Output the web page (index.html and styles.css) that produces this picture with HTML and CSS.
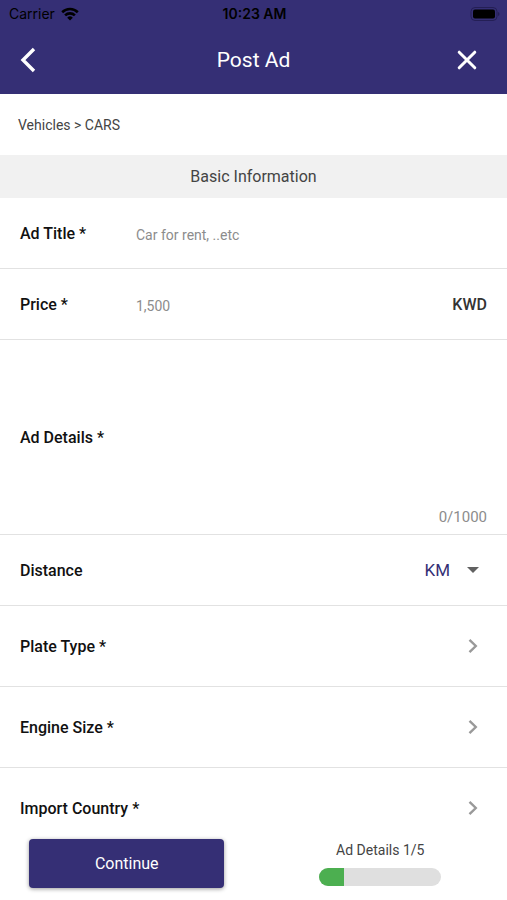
FILE: index.html
```
<!DOCTYPE html>
<html lang="en">
<head>
  <meta charset="UTF-8" />
  <meta name="viewport" content="width=device-width, initial-scale=1.0"/>
  <title>Post Ad</title>
  <link rel="stylesheet" href="styles.css">
</head>
<body>

  <header>
    <div class="status-bar">
      <div class="carrier">
        <span>Carrier</span>
        <svg width="18" height="14" viewBox="0 0 18 14" fill="none" stroke="#000" stroke-width="2.6">
          <path d="M1.2 5.2a11.2 11.2 0 0 1 15.6 0"/>
          <path d="M4.1 8.4a7 7 0 0 1 9.8 0"/>
          <path d="M9 13.6L6.2 10.7a4 4 0 0 1 5.6 0z" fill="#000" stroke="none"/>
        </svg>
      </div>
      <span class="time">10:23 AM</span>
      <svg class="battery" width="30" height="14" viewBox="0 0 30 14">
        <rect x="1" y="0.5" width="26" height="13" rx="4" fill="none" stroke="#241f55"/>
        <rect x="3" y="2.500" width="22" height="9" rx="2" fill="#000"/>
        <path d="M28 5v4q1.500-.6 1.500-2t-1.500-2z" fill="#241f55"/>
      </svg>
    </div>
    <div class="title-bar">
      <button class="icon-btn" type="button" aria-label="Back">
        <svg width="16" height="26" viewBox="0 0 16 26" fill="none" stroke="#fff" stroke-width="3.400">
          <path d="M14 2L3 13l11 11"/>
        </svg>
      </button>
      <h1>Post Ad</h1>
      <button class="icon-btn close" type="button" aria-label="Close">
        <svg width="20" height="20" viewBox="0 0 20 20" fill="none" stroke="#fff" stroke-width="3" stroke-linecap="round">
          <path d="M2.200 2.200l15.600 15.600M17.800 2.200L2.200 17.800"/>
        </svg>
      </button>
    </div>
  </header>

  <form id="ad-form">
    <p class="breadcrumb">Vehicles &gt; CARS</p>
    <h2 class="section-title">Basic Information</h2>

    <div class="row">
      <label for="title">Ad Title *</label>
      <input type="text" id="title" placeholder="Car for rent, ..etc" />
    </div>

    <div class="row">
      <label for="price">Price *</label>
      <input type="text" id="price" placeholder="1,500" />
      <span class="currency">KWD</span>
    </div>

    <div class="row details">
      <label for="details">Ad Details *</label>
      <textarea id="details" rows="6" maxlength="1000"></textarea>
      <span class="counter" id="counter">0/1000</span>
    </div>

    <div class="row">
      <label for="distance">Distance</label>
      <div class="select">
        <select id="distance">
          <option>KM</option>
          <option>Mile</option>
        </select>
        <svg width="12" height="6" viewBox="0 0 12 6"><path d="M0 0h12L6 6z" fill="#616161"/></svg>
      </div>
    </div>

    <button class="row picker" type="button">
      <span>Plate Type *</span>
      <svg width="10" height="16" viewBox="0 0 10 16"><path d="M1.500 1.800L7.800 8l-6.300 6.200"/></svg>
    </button>
    <button class="row picker" type="button">
      <span>Engine Size *</span>
      <svg width="10" height="16" viewBox="0 0 10 16"><path d="M1.500 1.800L7.800 8l-6.300 6.200"/></svg>
    </button>
    <button class="row picker" type="button">
      <span>Import Country *</span>
      <svg width="10" height="16" viewBox="0 0 10 16"><path d="M1.500 1.800L7.800 8l-6.300 6.200"/></svg>
    </button>
  </form>

  <footer>
    <button class="submit" type="submit" form="ad-form">Continue</button>
    <div class="step">
      <label for="progress">Ad Details 1/5</label>
      <progress id="progress" value="1" max="5"></progress>
    </div>
  </footer>

  <script>
    const details = document.getElementById("details");

    details.addEventListener("input", () => {
      document.getElementById("counter").textContent = `${details.value.length}/1000`;
    });
  </script>
</body>
</html>
```
FILE: styles.css
```
:root {
  --primary: #352f75;
  --green: #4caf50;
  --line: #e2e2e2;
  --muted: #8c8c8c;
  --text: #444;
}

* {
  box-sizing: border-box;
}

body {
  margin: 0;
  height: 100vh;
  display: flex;
  flex-direction: column;
  background: #fff;
  font-family: Roboto, sans-serif;
  color: #111;
}

button, input, textarea, select {
  font-family: inherit;
  border: none;
  background: none;
  padding: 0;
  margin: 0;
}

button {
  cursor: pointer;
}

svg {
  display: block;
}

header {
  flex: none;
  background: var(--primary);
}

.status-bar {
  display: grid;
  grid-template-columns: 1fr auto 1fr;
  align-items: center;
  height: 27px;
  padding: 0 7px 0 9px;
  font-family: Inter, sans-serif;
  font-size: 14px;
  color: #000;
}

.carrier {
  display: flex;
  align-items: center;
  gap: 6px;
}

.time {
  font-weight: 600;
}

.battery {
  justify-self: end;
}

.title-bar {
  display: grid;
  grid-template-columns: 1fr auto 1fr;
  align-items: center;
  height: 67px;
  padding: 0 30px 2px 20px;
}

.title-bar h1 {
  margin: 0;
  padding-left: 10px;
  font-size: 21px;
  font-weight: 400;
  color: #fff;
}

.icon-btn {
  justify-self: start;
}

.icon-btn.close {
  justify-self: end;
}

form {
  flex: 1;
  min-height: 0;
  overflow-y: auto;
  scrollbar-width: none;
}

.breadcrumb {
  margin: 0;
  padding: 1px 18px 0;
  line-height: 60px;
  font-size: 14px;
  color: var(--text);
}

.section-title {
  margin: 0;
  background: #f1f1f1;
  line-height: 43px;
  text-align: center;
  font-size: 16px;
  font-weight: 400;
  color: var(--text);
}

.row {
  display: flex;
  align-items: center;
  width: 100%;
  min-height: 71px;
  padding: 0 20px;
  border-bottom: 1px solid var(--line);
}

.row label, .picker {
  font-size: 16px;
  font-weight: 500;
  color: #111;
}

.row label {
  min-width: 116px;
}

.row input {
  flex: 1;
  min-width: 0;
  height: 44px;
  font-size: 14px;
  padding-top: 4px;
}

.row input::placeholder {
  color: var(--muted);
}

.currency {
  font-size: 16px;
  font-weight: 500;
  color: #333;
}

.details {
  min-height: 195px;
}

.details textarea {
  flex: 1;
  min-width: 0;
  height: 160px;
  font-size: 14px;
  resize: none;
}

.counter {
  align-self: flex-end;
  padding-bottom: 8px;
  font-size: 15px;
  color: var(--muted);
}

.select {
  display: flex;
  align-items: center;
  gap: 17px;
  margin-left: auto;
  padding-right: 8px;
}

.select select {
  appearance: none;
  font-size: 17px;
  color: var(--primary);
  field-sizing: content;
}

.picker {
  justify-content: space-between;
  min-height: 81px;
  padding-right: 29px;
}

.picker path {
  fill: none;
  stroke: #999;
  stroke-width: 2.4;
}

footer {
  flex: none;
  display: grid;
  grid-template-columns: 1fr 1fr;
  align-items: center;
  justify-items: center;
  padding: 10px 0 12px;
  background: #fff;
}

.submit {
  width: 77%;
  height: 49px;
  border-radius: 4px;
  background: var(--primary);
  box-shadow: 0 1px 4px rgba(0,0,0,0.4);
  color: #fff;
  font-size: 16px;
}

.step {
  display: flex;
  flex-direction: column;
  align-items: center;
  gap: 10px;
  width: 48%;
  white-space: nowrap;
  font-size: 14px;
  color: var(--text);
}

progress {
  appearance: none;
  width: 100%;
  height: 18px;
  border: none;
  border-radius: 9px;
  overflow: hidden;
}

progress::-webkit-progress-bar {
  background: #dfdfdf;
}

progress::-webkit-progress-value {
  background: var(--green);
}
```
